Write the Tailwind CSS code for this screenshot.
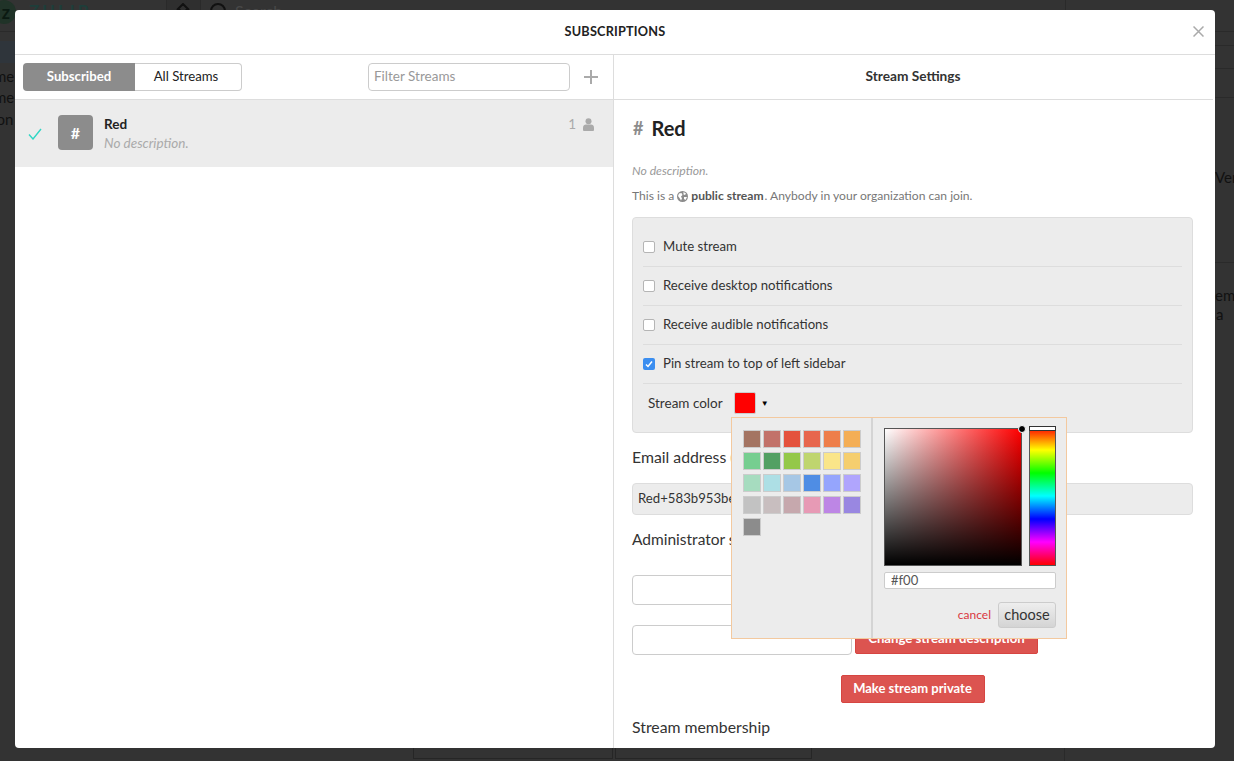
<!DOCTYPE html>
<html lang="en">
<head>
    <meta charset="UTF-8">
    <title>Subscriptions</title>
    <script src="https://cdn.jsdelivr.net/npm/@tailwindcss/browser@4"></script>
</head>
<body class="font-['Lato','Noto_Sans',sans-serif] bg-[#333333] text-[#333333] h-[761px] w-[1234px] overflow-hidden relative">

<!-- App behind the overlay -->
<div class="absolute inset-0 text-[#111] text-[15px]">
    <div class="absolute left-[-8px] top-[0px] w-[24px] h-[24px] rounded-full bg-[#203328] text-[#0b1a12] font-bold text-[18px] leading-[24px] text-center pl-[4px]">z</div>
    <div class="absolute left-[29px] top-[1px] text-[#1e3e3a] font-bold text-[17px] leading-[20px] tracking-[3px]">ZULIP</div>
    <div class="absolute left-[166px] top-0 w-[35px] h-[10px] border-x border-[#2a2a2a] bg-[#2f2f2f]"></div>
    <svg class="absolute left-[176px] top-[3px]" width="14" height="7" viewBox="0 0 14 7"><path d="M1 7 7 1 13 7M3.500 6v1M10.500 6v1" stroke="#111" stroke-width="2" fill="none"/></svg>
    <div class="absolute left-[210px] top-[3px] w-[16px] h-[16px] rounded-full border-2 border-[#111]"></div>
    <div class="absolute left-[235px] top-[1px] text-[16px] leading-[20px] text-[#484848]">Search</div>
    <div class="absolute left-0 top-[31px] w-[15px] h-px bg-[#2a2a2a]"></div>
    <div class="absolute left-0 top-[41px] w-[15px] h-[22px] bg-[#2f353b]"></div>
    <div class="absolute left-[1215px] top-[31px] w-[19px] h-[15px] border-y border-[#2a2a2a]"></div>
    <div class="absolute left-[1215px] top-[68px] w-[19px] h-[30px] border-y border-[#2a2a2a]"></div>
    <div class="absolute left-[1065px] top-0 h-[10px] w-px bg-[#2a2a2a]"></div>
    <div class="absolute left-[-6px] top-[65px]">me</div>
    <div class="absolute left-[-6px] top-[86px]">me</div>
    <div class="absolute left-[-7px] top-[108px]">ion</div>
    <div class="absolute left-[1215px] top-[166px]">Ver</div>
    <div class="absolute left-[1215px] top-[284px]">em</div>
    <div class="absolute left-[1216px] top-[303px]">a</div>
    <div class="absolute left-[1215px] top-[262px] w-[19px] h-px bg-[#2a2a2a]"></div>
    <div class="absolute left-[413px] top-[748px] w-[200px] h-[11px] border border-t-0 border-[#262626]"></div>
    <div class="absolute left-[615px] top-[748px] w-[197px] h-[11px] border border-t-0 border-[#262626]"></div>
    <div class="absolute left-[1064px] top-[748px] h-[13px] w-px bg-[#2a2a2a]"></div>
</div>

<!-- Modal -->
<div class="absolute left-[15px] top-[10px] w-[1200px] h-[738px] bg-white rounded-[4px] overflow-hidden flex flex-col">
    <div class="relative h-[45px] shrink-0 border-b border-[#dddddd] flex items-center justify-center">
        <h1 class="text-[12.700px] font-bold text-[#222] tracking-[0.2px]">SUBSCRIPTIONS</h1>
        <svg class="absolute right-[11px] top-[16px]" width="11" height="11" viewBox="0 0 11 11"><path d="M.5.5l10 10M10.500.5l-10 10" stroke="#aaaaaa" stroke-width="1.500" fill="none"/></svg>
    </div>

    <div class="flex flex-1 min-h-0">
        <!-- Stream list -->
        <div class="w-[599px] shrink-0 border-r border-[#dddddd]">
            <div class="h-[45px] border-b border-[#dddddd] flex items-center pl-[8px] pr-[14px]">
                <div class="flex h-[28px] w-[219px] text-[13.200px]">
                    <button class="w-[112px] pb-[1px] bg-[#8c8c8c] text-white font-bold rounded-l-[4px]">Subscribed</button>
                    <button class="flex-1 pb-[1px] pr-[4px] border border-l-0 border-[#cccccc] rounded-r-[4px] text-[#222]">All Streams</button>
                </div>
                <input class="ml-[126px] w-[202px] h-[28px] pb-[2px] border border-[#cccccc] rounded-[4px] px-[5px] text-[13.500px] placeholder:text-[#999999]" placeholder="Filter Streams">
                <svg class="ml-[14px]" width="14" height="14" viewBox="0 0 14 14"><path d="M7 0v14M0 7h14" stroke="#aaaaaa" stroke-width="2" fill="none"/></svg>
            </div>
            <div class="h-[67px] bg-[#ececec] flex pl-[13px] pr-[18px]">
                <svg class="mt-[28px]" width="14" height="12" viewBox="0 0 14 12"><path d="M1 6.500 5 11 13 1" stroke="#2fd6c4" stroke-width="1.400" fill="none"/></svg>
                <div class="mt-[15px] ml-[16px] w-[35px] h-[35px] rounded-[4px] bg-[#8c8c8c] text-white font-bold text-[16px] flex items-center justify-center">#</div>
                <div class="ml-[11px] mt-[15px] flex-1">
                    <div class="text-[13.500px] font-bold text-[#222] leading-[19px]">Red</div>
                    <div class="text-[13.500px] italic text-[#aaaaaa] leading-[19px]">No description.</div>
                </div>
                <div class="mt-[15px] flex items-start text-[#aaaaaa] text-[13.500px] leading-[19px]">
                    <span>1</span>
                    <svg class="ml-[7px] mt-[3px] mr-[1px]" width="11" height="13" viewBox="0 0 11 13"><circle cx="5.500" cy="3.200" r="3" fill="#aaaaaa"/><path d="M0 12V9.500C0 7.500 1.500 6.500 3 6.500h5c1.500 0 3 1 3 3V12a1 1 0 0 1-1 1H1a1 1 0 0 1-1-1z" fill="#aaaaaa"/></svg>
                </div>
            </div>
        </div>

        <!-- Stream settings -->
        <div class="relative flex-1 min-w-0 overflow-hidden">
            <div class="h-[45px] mr-[2px] pb-[1px] pr-[1px] border-b border-[#dddddd] flex items-center justify-center text-[13.700px] font-bold text-[#333]">Stream Settings</div>
            <div class="pl-[18px] pr-[22px]">
                <div class="mt-[15px] h-[26px] flex items-center text-[20px] font-bold text-[#222]">
                    <span class="text-[#8c8c8c] text-[18px] ml-[1px] mr-[8px]">#</span>Red
                </div>
                <p class="mt-[22px] text-[12.200px] leading-[16px] italic text-[#999999]">No description.</p>
                <p class="mt-[9px] text-[12.100px] leading-[16px] text-[#777777] flex items-center">
                    This is a
                    <svg class="mx-[3px]" width="11" height="11" viewBox="0 0 11 11"><circle cx="5.500" cy="5.500" r="5.500" fill="#8c8c8c"/><path d="M2 2.500 4.500 2 5.500 4 4 5.500 5 7.500 4 9.500 2.500 7 1 5zM6.500 1 9 2.500 8 4 6.500 3.500zM7 6h3L8.500 9 7 8z" fill="#ffffff"/></svg>
                    <b class="text-[#555555] mr-[1px]">public stream</b>. Anybody in your organization can join.
                </p>

                <div class="mt-[13px] h-[216px] w-[561px] bg-[#ececec] border border-[#dddddd] rounded-[4px] px-[10px] pt-[10px] text-[13.200px] text-[#333]">
                    <label class="h-[39px] flex items-center border-b border-[#dddddd]"><input type="checkbox" class="appearance-none w-[12px] h-[12px] bg-white border border-[#b5b5b5] rounded-[2px] mr-[8px]">Mute stream</label>
                    <label class="h-[39px] flex items-center border-b border-[#dddddd]"><input type="checkbox" class="appearance-none w-[12px] h-[12px] bg-white border border-[#b5b5b5] rounded-[2px] mr-[8px]">Receive desktop notifications</label>
                    <label class="h-[39px] flex items-center border-b border-[#dddddd]"><input type="checkbox" class="appearance-none w-[12px] h-[12px] bg-white border border-[#b5b5b5] rounded-[2px] mr-[8px]">Receive audible notifications</label>
                    <label class="h-[39px] flex items-center border-b border-[#dddddd]">
                        <span class="w-[12px] h-[12px] bg-[#3b8ef0] rounded-[2px] mr-[8px] flex items-center justify-center">
                            <svg width="8" height="8" viewBox="0 0 8 8"><path d="M1 4.500 3 6.500 7 1.500" stroke="#fff" stroke-width="1.500" fill="none"/></svg>
                        </span>Pin stream to top of left sidebar
                    </label>
                    <div class="h-[38px] flex items-center pl-[5px] text-[13.500px]">
                        Stream color
                        <span class="ml-[11px] w-[22px] h-[22px] bg-[#ff0000] border border-[#cccccc] rounded-[2px]"></span>
                        <span class="ml-[5px] text-[8px] text-black">▼</span>
                    </div>
                </div>

                <div class="mt-[14px] text-[15.800px] leading-[20px] text-[#333]">Email address (</div>
                <div class="mt-[16px] h-[32px] w-[561px] bg-[#ececec] border border-[#dddddd] rounded-[4px] flex items-center pb-[1px] px-[5px] text-[13.200px] text-[#333]">Red+583b953be2a1</div>
                <div class="mt-[14px] text-[15.500px] leading-[20px] text-[#333]">Administrator settings</div>
                <div class="mt-[26px] flex items-start">
                    <input class="w-[220px] h-[30px] border border-[#cccccc] rounded-[4px]">
                </div>
                <div class="mt-[20px] flex items-start">
                    <input class="w-[220px] h-[30px] border border-[#cccccc] rounded-[4px]">
                    <button class="ml-[3px] w-[183px] h-[29px] pb-[1px] bg-[#dc5450] border border-[#d64541] rounded-[2px] text-white font-bold text-[13.200px]">Change stream description</button>
                </div>
                <div class="mt-[20px] flex justify-center">
                    <button class="w-[144px] h-[28px] pb-[1px] bg-[#dc5450] border border-[#d64541] rounded-[2px] text-white font-bold text-[13px]">Make stream private</button>
                </div>
                <div class="mt-[14px] text-[15.800px] leading-[20px] text-[#333]">Stream membership</div>
            </div>

            <!-- Colour picker popover -->
            <div class="absolute left-[117px] top-[362px] w-[336px] h-[222px] bg-[#ececec] border border-[#f3c99f] flex">
                <div class="w-[141px] border-r-2 border-[#d4d4d4] pl-[11px] pt-[12px]">
                    <div class="grid grid-cols-[repeat(6,18px)] auto-rows-[18px] gap-x-[2px] gap-y-[4px]">
                        <span class="bg-[#a47462] border border-[#cccccc]"></span>
                        <span class="bg-[#c2726a] border border-[#cccccc]"></span>
                        <span class="bg-[#e4523d] border border-[#cccccc]"></span>
                        <span class="bg-[#e7664d] border border-[#cccccc]"></span>
                        <span class="bg-[#ee7e4a] border border-[#cccccc]"></span>
                        <span class="bg-[#f4ae55] border border-[#cccccc]"></span>
                        <span class="bg-[#76ce90] border border-[#cccccc]"></span>
                        <span class="bg-[#53a063] border border-[#cccccc]"></span>
                        <span class="bg-[#94c849] border border-[#cccccc]"></span>
                        <span class="bg-[#bfd56f] border border-[#cccccc]"></span>
                        <span class="bg-[#fae589] border border-[#cccccc]"></span>
                        <span class="bg-[#f5ce6e] border border-[#cccccc]"></span>
                        <span class="bg-[#a6dcbf] border border-[#cccccc]"></span>
                        <span class="bg-[#addfe5] border border-[#cccccc]"></span>
                        <span class="bg-[#a6c7e5] border border-[#cccccc]"></span>
                        <span class="bg-[#4f8de4] border border-[#cccccc]"></span>
                        <span class="bg-[#95a5fd] border border-[#cccccc]"></span>
                        <span class="bg-[#b0a5fd] border border-[#cccccc]"></span>
                        <span class="bg-[#c2c2c2] border border-[#cccccc]"></span>
                        <span class="bg-[#c8bebf] border border-[#cccccc]"></span>
                        <span class="bg-[#c6a8ad] border border-[#cccccc]"></span>
                        <span class="bg-[#e79ab5] border border-[#cccccc]"></span>
                        <span class="bg-[#bd86e5] border border-[#cccccc]"></span>
                        <span class="bg-[#9987e1] border border-[#cccccc]"></span>
                        <span class="bg-[#8c8c8c] border border-[#cccccc]"></span>
                    </div>
                </div>
                <div class="flex-1 pl-[11px] pr-[10px] pt-[8px]">
                    <div class="flex justify-between items-end h-[140px]">
                        <div class="relative w-[138px] h-[138px] border border-[#555555] bg-[linear-gradient(to_top,#000,transparent),linear-gradient(to_right,#fff,#f00)]">
                            <span class="absolute right-[-5px] top-[-4px] w-[8px] h-[8px] rounded-full bg-black border border-white"></span>
                        </div>
                        <div class="relative w-[27px] h-[140px] border border-[#555555] bg-[linear-gradient(to_bottom,#f00,#ff0,#0f0,#0ff,#00f,#f0f,#f00)]">
                            <span class="absolute left-[-1px] right-[-1px] top-[-1px] h-[5px] bg-white border border-[#333]"></span>
                        </div>
                    </div>
                    <input class="mt-[6px] w-[172px] h-[17px] bg-white border border-[#cccccc] rounded-[2px] px-[6px] text-[13px] text-[#555]" value="#f00">
                    <div class="mt-[11px] flex justify-end items-center">
                        <span class="text-[12px] text-[#d9363e] mr-[7px]">cancel</span>
                        <button class="w-[58px] h-[26px] border border-[#cccccc] rounded-[3px] bg-[linear-gradient(to_bottom,#eeeeee,#d4d4d4)] text-[14.500px] text-[#333]">choose</button>
                    </div>
                </div>
            </div>
        </div>
    </div>
</div>
</body>
</html>
